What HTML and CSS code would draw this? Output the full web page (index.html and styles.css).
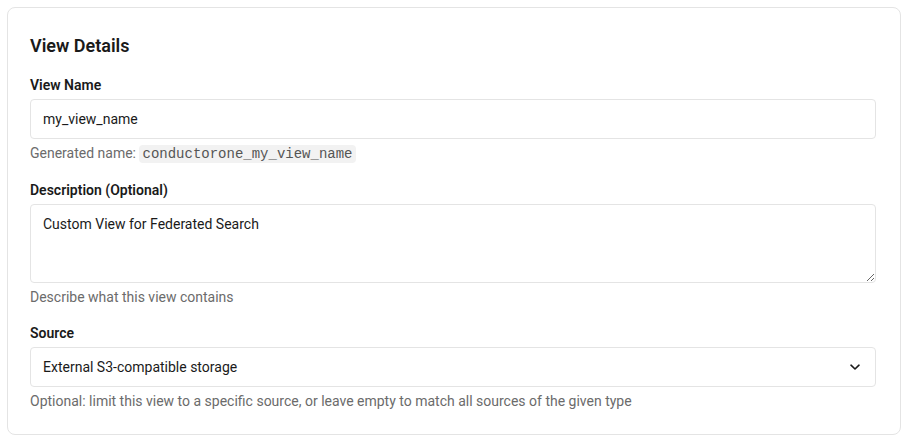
FILE: index.html
```html
<!DOCTYPE html>
<html>
<head>
<meta charset="utf-8">
<link rel="stylesheet" href="styles.css">
</head>
<body>
<div class="page">
  <section class="card">
    <h2 class="title">View Details</h2>
    <div class="field">
      <label class="label">View Name</label>
      <input class="control input" type="text" value="my_view_name">
      <p class="help">Generated name: <code class="code">conductorone_my_view_name</code></p>
    </div>
    <div class="field">
      <label class="label">Description (Optional)</label>
      <textarea class="control textarea">Custom View for Federated Search</textarea>
      <p class="help">Describe what this view contains</p>
    </div>
    <div class="field">
      <label class="label">Source</label>
      <div class="control select">
        <span>External S3-compatible storage</span>
        <svg class="chev" width="12" height="12" viewBox="0 0 12 12"><path d="M2 4.2 L6 8 L10 4.2" fill="none" stroke="#1a1a1a" stroke-width="1.6" stroke-linecap="round" stroke-linejoin="round"/></svg>
      </div>
      <p class="help">Optional: limit this view to a specific source, or leave empty to match all sources of the given type</p>
    </div>
  </section>
</div>
</body>
</html>
```
FILE: styles.css
```css
* { box-sizing: border-box; }
html, body { margin: 0; background: #ffffff; }
body {
  font-family: Roboto, "Noto Sans", sans-serif;
  font-size: 14px;
  line-height: 20px;
  color: #1a1a1a;
}
.page { padding: 7px 7px 8px 7px; }
.card {
  width: 894px;
  border: 1px solid #e4e4e4;
  border-radius: 8px;
  padding: 24px 24px 23px 22px;
  display: flex;
  flex-direction: column;
  gap: 15px;
}
.title {
  margin: 0;
  font-size: 18px;
  line-height: 28px;
  font-weight: 600;
}
.field { display: flex; flex-direction: column; }
.field + .field { margin-top: 1px; }
.label {
  font-weight: 600;
  margin-bottom: 4px;
}
.control {
  width: 100%;
  border: 1px solid #e4e4e4;
  border-radius: 4px;
  background: #fff;
  font: inherit;
  color: #1a1a1a;
  padding: 9px 12px;
  outline: none;
}
.input { height: 40px; }
.textarea { height: 79px; resize: vertical; display: block; }
.select {
  height: 40px;
  display: flex;
  align-items: center;
  justify-content: space-between;
  padding-right: 14px;
}
.chev { display: block; }
.help {
  margin: 4px 0 0;
  color: #6b6b6b;
}
.code {
  font-family: "Liberation Mono", monospace;
  font-size: 14px;
  background: #f2f2f2;
  color: #555;
  border-radius: 4px;
  padding: 1px 3px;
}
```
